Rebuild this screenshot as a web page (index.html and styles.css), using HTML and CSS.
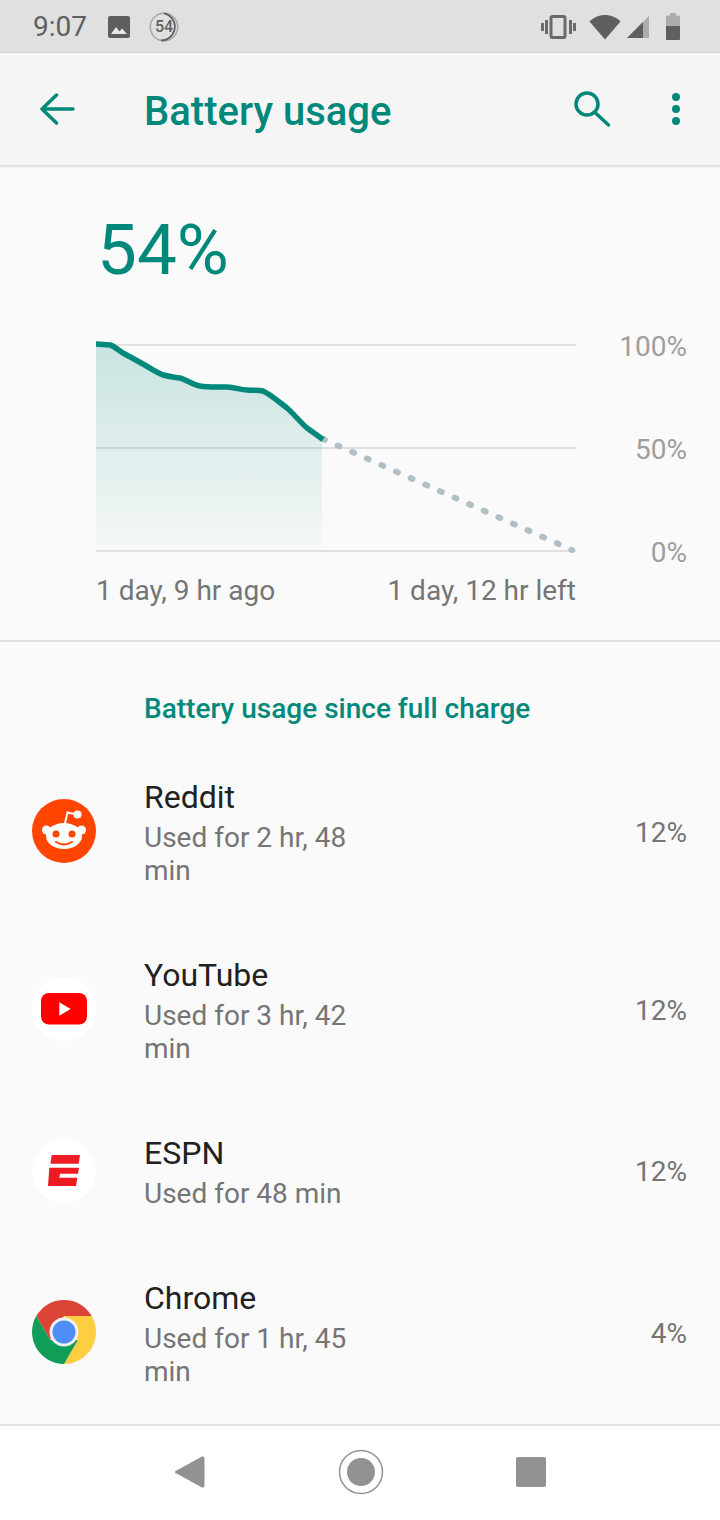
FILE: index.html
```html
<!DOCTYPE html>
<html lang="en">
<head>
<meta charset="utf-8">
<title>Battery usage</title>
<link rel="stylesheet" href="styles.css">
</head>
<body>
<div class="phone">
  <header class="status">
    <div class="status-left">
      <span class="time">9:07</span>
      <svg class="st-img" width="24" height="24" viewBox="0 0 24 24"><path fill="#5f5f5f" d="M3 1h18a2 2 0 0 1 2 2v18a2 2 0 0 1-2 2H3a2 2 0 0 1-2-2V3a2 2 0 0 1 2-2z"/><path fill="#e8e8e8" d="M4 19l5-7 3.500 4.500 2.500-3 5 5.500z"/></svg>
      <span class="st-ring"><svg width="32" height="32" viewBox="0 0 32 32"><circle cx="16" cy="16" r="13.700" fill="none" stroke="#a6a6a6" stroke-width="1.500"/><path d="M16 2.300A13.700 13.700 0 0 1 13 29.400" fill="none" stroke="#5f5f5f" stroke-width="1.800"/></svg><b class="ring-text">54</b></span>
    </div>
    <div class="status-right">
      <svg width="36" height="26" viewBox="0 0 36 26"><path fill="none" stroke="#6a6a6a" stroke-width="3" d="M11.500 2.500h11a1.500 1.500 0 0 1 1.500 1.500v18a1.500 1.500 0 0 1-1.500 1.500h-11A1.500 1.500 0 0 1 10 22V4a1.500 1.500 0 0 1 1.500-1.500z"/><path stroke="#6a6a6a" stroke-width="3" d="M5.500 6v14M29.500 6v14M1.500 9v8M33.500 9v8"/></svg>
      <svg class="st-wifi" width="32" height="26" viewBox="0 0 32 26"><path fill="#5f5f5f" d="M0.500 7.500C4.500 3.500 10 1 16 1s11.500 2.500 15.500 6.500L16 25.500z"/></svg>
      <svg class="st-signal" width="22" height="24" viewBox="0 0 22 24"><path fill="#acacac" d="M22 1v22H0z"/><path fill="#5f5f5f" d="M16 7v16H0z"/></svg>
      <svg class="st-batt" width="14" height="27" viewBox="0 0 14 27"><path fill="#acacac" d="M4 0h6v2.500h3a1 1 0 0 1 1 1V13H0V3.500a1 1 0 0 1 1-1h3z"/><path fill="#5f5f5f" d="M0 13h14v13a1 1 0 0 1-1 1H1a1 1 0 0 1-1-1z"/></svg>
    </div>
  </header>

  <nav class="appbar">
    <svg class="back" width="36" height="32" viewBox="0 0 36 32"><path fill="none" stroke="#00897b" stroke-width="3.500" stroke-linecap="round" stroke-linejoin="round" d="M33 16H2M16.500 2L2 16l14.500 14"/></svg>
    <h1 class="title">Battery usage</h1>
    <svg class="search" width="38" height="38" viewBox="0 0 38 38"><circle cx="13" cy="14" r="11" fill="none" stroke="#00897b" stroke-width="3.500"/><path stroke="#00897b" stroke-width="3.500" stroke-linecap="round" d="M21 22.500L34.500 35"/></svg>
    <svg class="more" width="8" height="32" viewBox="0 0 8 32"><circle cx="4" cy="4" r="4" fill="#00897b"/><circle cx="4" cy="16" r="4" fill="#00897b"/><circle cx="4" cy="28" r="4" fill="#00897b"/></svg>
  </nav>

  <main class="content">
    <section class="summary">
      <div class="big">54%</div>
      <div class="chart-row">
        <div class="chart-col">
          <svg class="chart" width="480" height="220" viewBox="96 336 480 220">
            <defs>
              <linearGradient id="area" x1="0" y1="0" x2="0" y2="1">
                <stop offset="0" stop-color="#00897b" stop-opacity=".2"/>
                <stop offset="1" stop-color="#00897b" stop-opacity=".025"/>
              </linearGradient>
            </defs>
            <path stroke="#e0e0e0" stroke-width="2" d="M96 345h480M96 448h480M96 551h480"/>
            <path fill="url(#area)" d="M96 344L110 345C114 346 118 350 123 353L143 364C150 368 157 373 163 375C170 377 175 377 180 378C187 380 193 385 200 386C208 387.500 218 387 227 387C235 387.500 240 389.500 247 390C253 390.500 258 390 263 391C270 394 279 402 287 408C294 414 300 422 307 428L322 440V546H96z"/>
            <path fill="none" stroke="#b0bec5" stroke-width="6" stroke-linecap="round" stroke-dasharray="2 14" d="M323 439L572 550"/>
            <path fill="none" stroke="#00897b" stroke-width="5.500" stroke-linejoin="round" stroke-linecap="butt" d="M96 344L110 345C114 346 118 350 123 353L143 364C150 368 157 373 163 375C170 377 175 377 180 378C187 380 193 385 200 386C208 387.500 218 387 227 387C235 387.500 240 389.500 247 390C253 390.500 258 390 263 391C270 394 279 402 287 408C294 414 300 422 307 428L323 439.500"/>
          </svg>
          <div class="axis-x"><span>1 day, 9 hr ago</span><span>1 day, 12 hr left</span></div>
        </div>
        <div class="axis-y"><span>100%</span><span>50%</span><span>0%</span></div>
      </div>
    </section>

    <section class="usage">
      <h2 class="section-title">Battery usage since full charge</h2>

      <div class="row">
        <svg class="app" width="64" height="64" viewBox="0 0 64 64">
          <circle cx="32" cy="32" r="32" fill="#ff4500"/>
          <path fill="none" stroke="#fff" stroke-width="2" d="M33 24l2.500-10.500L45 15.500"/>
          <circle cx="45.500" cy="15.500" r="4" fill="#fff"/>
          <circle cx="14.500" cy="31" r="4.500" fill="#fff"/><circle cx="49.500" cy="31" r="4.500" fill="#fff"/>
          <ellipse cx="32" cy="37" rx="18" ry="13" fill="#fff"/>
          <circle cx="24" cy="35" r="3.500" fill="#ff4500"/><circle cx="40" cy="35" r="3.500" fill="#ff4500"/>
          <path fill="none" stroke="#ff4500" stroke-width="2" stroke-linecap="round" d="M24 43q8 5 16 0"/>
        </svg>
        <div class="meta"><div class="name">Reddit</div><div class="sub">Used for 2 hr, 48 min</div></div>
        <div class="pct">12%</div>
      </div>

      <div class="row">
        <svg class="app" width="64" height="64" viewBox="0 0 64 64">
          <circle cx="32" cy="32" r="32" fill="#fff"/>
          <rect x="9" y="16" width="46" height="31.500" rx="8" fill="#f00"/>
          <path fill="#fff" d="M27.300 25.300L38.700 32l-11.400 6.700z"/>
        </svg>
        <div class="meta"><div class="name">YouTube</div><div class="sub">Used for 3 hr, 42 min</div></div>
        <div class="pct">12%</div>
      </div>

      <div class="row row-short">
        <svg class="app" width="64" height="64" viewBox="0 0 64 64">
          <circle cx="32" cy="32" r="32" fill="#fff"/>
          <path fill="#ed1c24" d="M19.700 16H48l-1.300 8.700H18.500zM17.300 28.700H47L46 34.700H28l-.7 4H45.300L44 47H16z"/>
        </svg>
        <div class="meta"><div class="name">ESPN</div><div class="sub">Used for 48 min</div></div>
        <div class="pct">12%</div>
      </div>

      <div class="row">
        <svg class="app" width="64" height="64" viewBox="0 0 64 64">
          <path fill="#db4437" d="M4.300 16A32 32 0 0 1 59.700 16H32L18.100 40z"/>
          <path fill="#ffcd40" transform="rotate(120 32 32)" d="M4.300 16A32 32 0 0 1 59.700 16H32L18.100 40z"/>
          <path fill="#0f9d58" transform="rotate(240 32 32)" d="M4.300 16A32 32 0 0 1 59.700 16H32L18.100 40z"/>
          <circle cx="32" cy="32" r="14.500" fill="#f1f1f1"/>
          <circle cx="32" cy="32" r="11.500" fill="#4e8df5"/>
        </svg>
        <div class="meta"><div class="name">Chrome</div><div class="sub">Used for 1 hr, 45 min</div></div>
        <div class="pct">4%</div>
      </div>
    </section>
  </main>

  <footer class="navbar">
    <svg width="30" height="34" viewBox="0 0 30 34"><path fill="#929292" d="M27 1.500a2 2 0 0 1 2.500 2v27a2 2 0 0 1-2.500 2L1.500 18.500a1.500 1.500 0 0 1 0-3z"/></svg>
    <svg width="46" height="46" viewBox="0 0 46 46"><circle cx="23" cy="23" r="21.500" fill="none" stroke="#929292" stroke-width="1.500"/><circle cx="23" cy="23" r="14" fill="#929292"/></svg>
    <span class="nav-square"></span>
  </footer>
</div>
</body>
</html>
```

FILE: styles.css
```css
* { box-sizing: border-box; }
html, body { margin: 0; padding: 0; }
body { background: #fafafa; font-family: Roboto, "Noto Sans", sans-serif; }
.phone { width: 720px; height: 1520px; display: flex; flex-direction: column; overflow: hidden; }

.status { height: 53px; flex: none; background: #e0e0e0; display: flex; justify-content: space-between; align-items: center; padding: 0 40px 0 33px; }
.status-left, .status-right { display: flex; align-items: center; }
.time { font-size: 28px; color: #5f5f5f; width: 74px; }
.st-img { margin-right: 17px; }
.st-ring { position: relative; width: 32px; height: 32px; display: block; }
.st-ring svg { display: block; }
.ring-text { position: absolute; inset: 0; display: flex; align-items: center; justify-content: center; font-size: 16px; font-weight: 500; color: #5f5f5f; }
.st-wifi { margin-left: 12px; }
.st-signal { margin-left: 6px; }
.st-batt { margin-left: 17px; }

.appbar { height: 112px; flex: none; background: #f5f5f5; display: flex; align-items: center; padding-left: 40px; box-shadow: 0 1px 3px rgba(0,0,0,.2); position: relative; }
.back { flex: none; margin-right: 68px; }
.title { margin: 0; flex: 1; font-size: 40px; line-height: 48px; padding-top: 5px; font-weight: 500; color: #00897b; }
.search { flex: none; margin-right: 60px; }
.more { flex: none; margin-right: 40px; }

.content { flex: 1; min-height: 0; background: #fafafa; display: flex; flex-direction: column; }
.summary { height: 477px; flex: none; border-bottom: 2px solid #e0e0e0; padding: 40px 33px 0 96px; }
.big { font-size: 71px; line-height: 84px; font-weight: 400; color: #00897b; padding: 3px 0 0 1px; height: 131px; }
.chart-row { display: flex; justify-content: space-between; align-items: flex-start; }
.chart { display: block; }
.axis-x { display: flex; justify-content: space-between; font-size: 28px; line-height: 32px; color: #757575; margin-top: 19px; width: 480px; }
.axis-y { display: flex; flex-direction: column; align-items: flex-end; justify-content: space-between; font-size: 28px; line-height: 32px; color: #9e9e9e; height: 238px; margin-top: -5px; }

.usage { flex: 1; border-bottom: 2px solid #e0e0e0; }
.section-title { margin: 0; padding: 49px 0 0 144px; height: 100px; font-size: 28px; line-height: 36px; font-weight: 500; color: #00897b; }
.row { display: flex; align-items: center; padding: 0 33px 0 32px; height: 178px; }
.row-short { height: 145px; }
.app { flex: none; display: block; }
.meta { width: 250px; margin-left: 48px; flex: none; }
.name { font-size: 32px; line-height: 44px; color: #212121; }
.sub { font-size: 28px; line-height: 33px; margin-top: 2px; color: #757575; }
.pct { margin-left: auto; padding-top: 2px; font-size: 28px; color: #757575; }

.navbar { height: 94px; flex: none; background: #fff; display: flex; align-items: center; justify-content: center; gap: 133px; padding-bottom: 2px; }
.nav-square { display: block; width: 30px; height: 30px; margin-left: -1px; border-radius: 2px; background: #929292; }
```
